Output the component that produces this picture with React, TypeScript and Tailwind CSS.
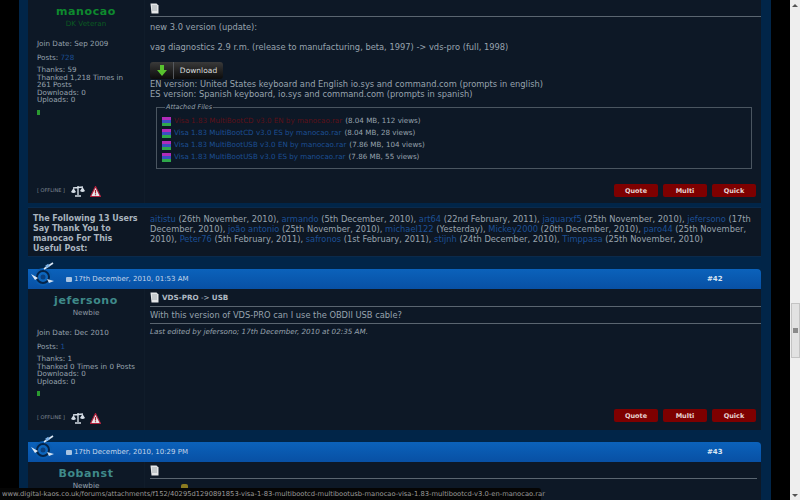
import type { ReactNode } from 'react'

const font = { fontFamily: '"DejaVu Sans", sans-serif' }

function Logo() {
  return (
    <svg width="30" height="25" viewBox="0 0 30 25" className="absolute left-[1px] top-[-8px]">
      <circle cx="14" cy="16" r="9" fill="#0a5cb0" />
      <circle cx="14" cy="16" r="6" fill="#0d66bd" stroke="#04244a" strokeWidth="2" />
      <circle cx="14" cy="16" r="2.5" fill="#0a3f7e" />
      <path d="M2 13 L9 17 L6 19 Z" fill="#dbe8f5" />
      <path d="M18 18 L25 20 L20 22 Z" fill="#cfe0f2" />
      <path d="M15 8 L24 2" stroke="#dbe8f5" strokeWidth="1.6" />
      <path d="M17 6 L20 4" stroke="#7fb2e4" strokeWidth="3" />
    </svg>
  )
}

function PostHeader({ date, num }: { date: string; num: string }) {
  return (
    <div className="relative h-[20px] shrink-0 rounded-tr-[4px] bg-gradient-to-b from-[#0b62bb] to-[#0850a4] text-[7px] text-[#c4d6ea]">
      <Logo />
      <div className="flex h-full items-center pl-[38px]">
        <span className="mr-[2px] h-[5px] w-[6px] rounded-[1px] bg-[#a9c4e2]" />
        <span>{date}</span>
        <span className="absolute left-[679px] font-bold text-[#dbe6f3]">{num}</span>
      </div>
    </div>
  )
}

function DocIcon() {
  return (
    <svg width="9" height="11" viewBox="0 0 9 11" className="shrink-0">
      <path d="M0.5 0.5 H6.5 L8.5 2.5 V10.5 H1.5 Z" fill="#e4e6e8" />
      <path d="M2 3 H7 M2 5 H7 M2 7 H7" stroke="#8b929a" strokeWidth="0.7" />
    </svg>
  )
}

function ScalesIcon() {
  return (
    <svg width="14" height="12" viewBox="0 0 14 12">
      <path d="M7 1 V10 M4 11 H10 M2 3 L12 2" stroke="#d5dde6" strokeWidth="1.4" fill="none" />
      <path d="M0 7 L2.5 3 L5 7 Q2.5 9 0 7 Z M9 6 L11.5 2 L14 6 Q11.5 8 9 6 Z" fill="#d5dde6" />
    </svg>
  )
}

function WarnIcon() {
  return (
    <svg width="11" height="11" viewBox="0 0 11 11">
      <path d="M5.5 0.5 L10.5 10.5 H0.5 Z" fill="#e8e8ec" stroke="#b0203c" strokeWidth="1.2" />
      <path d="M5.5 4 V7.5 M5.5 8.3 V9.3" stroke="#a81c2c" strokeWidth="1.2" />
    </svg>
  )
}

function UserCol({ name, nameClass, rank, rankClass, children }: {
  name: string
  nameClass: string
  rank: string
  rankClass: string
  children: ReactNode
}) {
  return (
    <div className="flex w-[117px] shrink-0 flex-col border-r border-[#101c2a] text-[7.2px] leading-[7.5px] text-[#98a3ae]">
      <div className={`text-center text-[11px] font-bold leading-[14px] tracking-[0.6px] ${nameClass}`}>{name}</div>
      <div className={`text-center text-[7.2px] leading-[9px] ${rankClass}`}>{rank}</div>
      <div className="flex grow flex-col pl-[9px]">{children}</div>
      <div className="mb-[6px] flex items-center pl-[9px]">
        <span className="mr-[6px] text-[5px] text-[#7d8792]">[ OFFLINE ]</span>
        <ScalesIcon />
        <span className="w-[5px]" />
        <WarnIcon />
      </div>
    </div>
  )
}

function Buttons() {
  return (
    <div className="mr-[5px] flex justify-end gap-[5px]">
      {['Quote', 'Multi', 'Quick'].map((b) => (
        <div key={b} className="flex h-[13px] w-[44px] items-center justify-center rounded-[2px] bg-[#7e0000] text-[6.5px] font-bold text-[#e8d4d4]">
          {b}
        </div>
      ))}
    </div>
  )
}

function RarIcon() {
  return (
    <span className="mr-[3px] inline-flex h-[9px] w-[9px] shrink-0 flex-col">
      <span className="h-[3px] bg-[#b02bb8]" />
      <span className="h-[3px] bg-[#3a4fc0]" />
      <span className="h-[3px] bg-[#2ea84a]" />
    </span>
  )
}

function FileRow({ name, info, red }: { name: string; info: string; red?: boolean }) {
  return (
    <div className="flex h-[12px] items-center">
      <RarIcon />
      <span className={red ? 'text-[#5c1018]' : 'text-[#1c4f94]'}>{name}</span>
      <span className="ml-[3px] text-[#98a3ae]">{info}</span>
    </div>
  )
}

function Thanks() {
  const a = 'text-[#1c4f94]'
  return (
    <div className="mt-[4px] flex h-[50px] shrink-0 border-y border-[#0a2a4c] bg-[#0d1724] pt-[6px] text-[8.3px] leading-[10px] text-[#98a3ae]">
      <div className="w-[122px] shrink-0 pl-[5px] pr-[11px] text-[8px] font-bold text-[#a9b4bf]">
        The Following 13 Users Say Thank You to manocao For This Useful Post:
      </div>
      <div className="pr-[10px]">
        <span className={a}>aitistu</span> (26th November, 2010), <span className={a}>armando</span> (5th December, 2010), <span className={a}>art64</span> (22nd February, 2011), <span className={a}>jaguarxf5</span> (25th November, 2010), <span className={a}>jefersono</span> (17th December, 2010), <span className={a}>joão antonio</span> (25th November, 2010), <span className={a}>michael122</span> (Yesterday), <span className={a}>Mickey2000</span> (20th December, 2010), <span className={a}>paro44</span> (25th November, 2010), <span className={a}>Peter76</span> (5th February, 2011), <span className={a}>safronos</span> (1st February, 2011), <span className={a}>stijnh</span> (24th December, 2010), <span className={a}>Timppasa</span> (25th November, 2010)
      </div>
    </div>
  )
}

export default function App() {
  return (
    <div className="relative flex h-[500px] w-[800px] overflow-hidden bg-black" style={font}>
      <div className="w-[19px] shrink-0" />

      <main className="flex h-full w-[752px] shrink-0 flex-col bg-[#012548] pl-[9px] pr-[10px]">
        {/* post 41, scrolled off the top */}
        <section className="flex h-[203px] shrink-0 bg-[#0d1826]">
          <UserCol name="manocao" nameClass="pt-[5px] text-[#0d8a2e]" rank="DK Veteran" rankClass="text-[#0a5a22]">
            <div className="mt-[12px]">Join Date: Sep 2009</div>
            <div className="mt-[6px]">Posts: <span className="text-[#1c4f94]">728</span></div>
            <div className="mt-[5px]">Thanks: 59</div>
            <div>Thanked 1,218 Times in</div>
            <div>261 Posts</div>
            <div>Downloads: 0</div>
            <div>Uploads: 0</div>
            <div className="mt-[6px] h-[5px] w-[3px] bg-[#2a9a30]" />
          </UserCol>
          <div className="flex grow flex-col pl-[5px] text-[8.3px] leading-[10px] text-[#98a3ae]">
            <div className="mt-[3px] h-[14px] border-b border-[#5a6570]"><DocIcon /></div>
            <div className="mt-[5px]">new 3.0 version (update):</div>
            <div className="mt-[10px]">vag diagnostics 2.9 r.m. (release to manufacturing, beta, 1997) -&gt; vds-pro (full, 1998)</div>
            <div className="mt-[10px] flex h-[17px] w-[73px] overflow-hidden rounded-[3px] bg-gradient-to-b from-[#3a3a3a] to-[#0c0c0c]">
              <div className="flex w-[24px] items-center justify-center border-r border-[#55595e]">
                <svg width="10" height="11" viewBox="0 0 10 11">
                  <path d="M3 0 H7 V5 H10 L5 11 L0 5 H3 Z" fill="#58c22e" />
                </svg>
              </div>
              <div className="flex grow items-center justify-center text-[7.5px] text-[#d8dcdc]">Download</div>
            </div>
            <div>EN version: United States keyboard and English io.sys and command.com (prompts in english)</div>
            <div>ES version: Spanish keyboard, io.sys and command.com (prompts in spanish)</div>
            <fieldset className="mt-[4px] ml-[6px] mr-[9px] h-[66px] border border-[#4a5560] pl-[5px] pt-[4px] text-[7.15px]">
              <legend className="ml-[3px] px-[1px] text-[6.5px] italic leading-[8px] text-[#98a3ae]">Attached Files</legend>
              <FileRow red name="Visa 1.83 MultiBootCD v3.0 EN by manocao.rar" info="(8.04 MB, 112 views)" />
              <FileRow name="Visa 1.83 MultiBootCD v3.0 ES by manocao.rar" info="(8.04 MB, 28 views)" />
              <FileRow name="Visa 1.83 MultiBootUSB v3.0 EN by manocao.rar" info="(7.86 MB, 104 views)" />
              <FileRow name="Visa 1.83 MultiBootUSB v3.0 ES by manocao.rar" info="(7.86 MB, 55 views)" />
            </fieldset>
            <div className="grow" />
            <div className="mb-[6px]"><Buttons /></div>
          </div>
        </section>

        <Thanks />

        <div className="mt-[12px]" />
        <PostHeader date="17th December, 2010, 01:53 AM" num="#42" />
        <section className="flex h-[141px] shrink-0 bg-[#0d1826]">
          <UserCol name="jefersono" nameClass="pt-[5px] text-[#3f8a8a]" rank="Newbie" rankClass="text-[#8f9aa5]">
            <div className="mt-[12px]">Join Date: Dec 2010</div>
            <div className="mt-[6px]">Posts: <span className="text-[#1c4f94]">1</span></div>
            <div className="mt-[5px]">Thanks: 1</div>
            <div>Thanked 0 Times in 0 Posts</div>
            <div>Downloads: 0</div>
            <div>Uploads: 0</div>
            <div className="mt-[6px] h-[5px] w-[3px] bg-[#2a9a30]" />
          </UserCol>
          <div className="flex grow flex-col pl-[5px] text-[8.3px] leading-[10px] text-[#98a3ae]">
            <div className="mt-[3px] flex h-[15px] gap-[3px] border-b border-[#5a6570] text-[7.2px] text-[#b0bac4]">
              <DocIcon />
              <span className="leading-[11px]"><b>VDS-PRO</b> -&gt; <b>USB</b></span>
            </div>
            <div className="h-[17px] border-b border-[#5a6570] pt-[3px]">With this version of VDS-PRO can I use the OBDII USB cable?</div>
            <div className="mt-[3px] text-[7.2px] italic">Last edited by jefersono; 17th December, 2010 at 02:35 AM.</div>
            <div className="grow" />
            <div className="mb-[8px]"><Buttons /></div>
          </div>
        </section>

        <div className="mt-[12px]" />
        <PostHeader date="17th December, 2010, 10:29 PM" num="#43" />
        <section className="flex grow bg-[#0d1826]">
          <div className="w-[117px] shrink-0 border-r border-[#101c2a] text-center">
            <div className="pt-[5px] text-[11px] font-bold leading-[14px] tracking-[0.6px] text-[#3f8a8a]">Bobanst</div>
            <div className="text-[7.2px] leading-[9px] text-[#98a3ae]">Newbie</div>
          </div>
          <div className="grow pl-[5px]">
            <div className="mt-[3px] mr-[4px] h-[14px] border-b border-[#5a6570]"><DocIcon /></div>
            <div className="ml-[31px] mt-[5px] h-[4px] w-[7px] rounded-t-[2px] bg-[#8a7a20]" />
          </div>
        </section>
      </main>

      <div className="w-[19px] shrink-0" />

      {/* browser scrollbar */}
      <div className="flex w-[10px] shrink-0 flex-col items-center bg-[#eeeeee]">
        <span className="mt-[4px] h-0 w-0 border-x-[3px] border-b-[3px] border-x-transparent border-b-[#555555]" />
        <div className="mt-[296px] flex h-[55px] w-[9px] items-center justify-center border border-[#c4c4c4] bg-[#e2e2e2]">
          <span className="h-[5px] w-[5px] bg-[#8a8a8a]" />
        </div>
        <div className="grow" />
        <span className="mb-[3px] h-0 w-0 border-x-[3px] border-t-[3px] border-x-transparent border-t-[#555555]" />
      </div>

      {/* link target status bubble */}
      <div className="absolute bottom-0 left-0 h-[12px] w-[541px] whitespace-nowrap rounded-tr-[3px] bg-[#050505] pl-[2px] text-[6.75px] leading-[12px] text-[#9a9a9a]">
        www.digital-kaos.co.uk/forums/attachments/f152/40295d1290891853-visa-1-83-multibootcd-multibootusb-manocao-visa-1.83-multibootcd-v3.0-en-manocao.rar
      </div>
    </div>
  )
}
